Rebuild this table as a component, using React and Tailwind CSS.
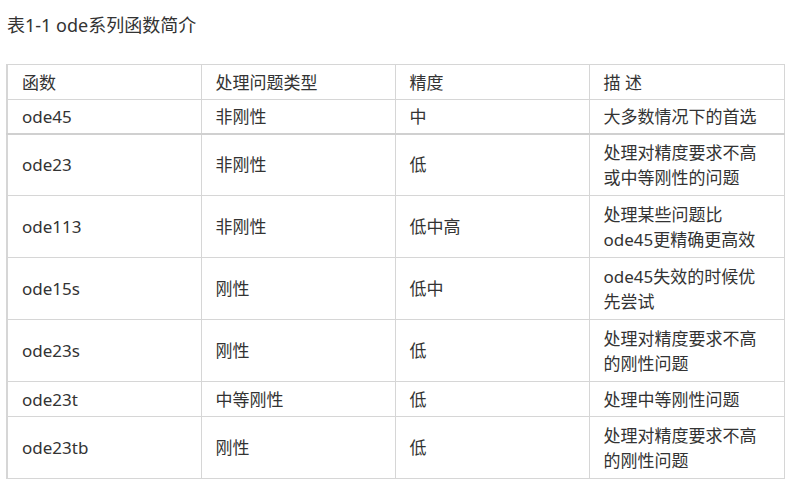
import React from "react";

const rows = [
  { f: "ode45", t: "非刚性", p: "中", d: ["大多数情况下的首选"], h: "h-[34px]", thick: true },
  { f: "ode23", t: "非刚性", p: "低", d: ["处理对精度要求不高", "或中等刚性的问题"], h: "h-[62px]" },
  { f: "ode113", t: "非刚性", p: "低中高", d: ["处理某些问题比", "ode45更精确更高效"], h: "h-[62px]" },
  { f: "ode15s", t: "刚性", p: "低中", d: ["ode45失效的时候优", "先尝试"], h: "h-[62px]" },
  { f: "ode23s", t: "刚性", p: "低", d: ["处理对精度要求不高", "的刚性问题"], h: "h-[62px]" },
  { f: "ode23t", t: "中等刚性", p: "低", d: ["处理中等刚性问题"], h: "h-[35px]" },
  { f: "ode23tb", t: "刚性", p: "低", d: ["处理对精度要求不高", "的刚性问题"], h: "h-[62px]" },
];

export default function App() {
  return (
    <div className="w-[791px] h-[489px] bg-white text-[#333] font-['Noto_Sans','Noto_Sans_CJK_SC',sans-serif]">
      <div className="pl-[7px] pt-[13px] text-[18px] leading-[25px]">表1-1 ode系列函数简介</div>
      <div className="pl-[6px] pt-[26px]">
        <table className="w-[777px] table-fixed border-collapse text-[17px] leading-[25px] border-l-2 border-[#d6d6d6]">
          <colgroup>
            <col className="w-[194px]" />
            <col className="w-[194px]" />
            <col className="w-[194px]" />
            <col className="w-[195px]" />
          </colgroup>
          <tbody>
            <tr className="h-[35px]">
              <td className="border border-[#d6d6d6] pl-[14px] align-middle">函数</td>
              <td className="border border-[#d6d6d6] pl-[14px] align-middle">处理问题类型</td>
              <td className="border border-[#d6d6d6] pl-[14px] align-middle">精度</td>
              <td className="border border-[#d6d6d6] pl-[14px] align-middle">描 述</td>
            </tr>
            {rows.map((r) => (
              <tr key={r.f} className={r.h + (r.thick ? " border-b-2 border-[#d0d0d0]" : "")}>
                <td className="border border-[#d6d6d6] pl-[14px] align-middle">{r.f}</td>
                <td className="border border-[#d6d6d6] pl-[14px] align-middle">{r.t}</td>
                <td className="border border-[#d6d6d6] pl-[14px] align-middle">{r.p}</td>
                <td className="border border-[#d6d6d6] pl-[14px] align-middle whitespace-nowrap">
                  {r.d.map((line, i) => (
                    <div key={i}>{line}</div>
                  ))}
                </td>
              </tr>
            ))}
          </tbody>
        </table>
      </div>
    </div>
  );
}
